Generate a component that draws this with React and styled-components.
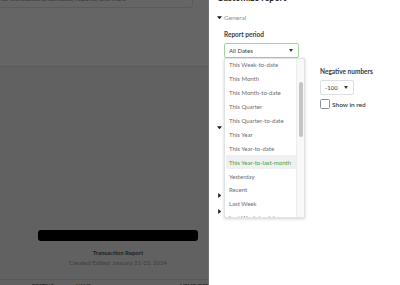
import React from 'react';
import styled, { createGlobalStyle } from 'styled-components';

const GlobalStyle = createGlobalStyle`
  html, body { margin: 0; padding: 0; }
  body { font-family: Lato, "Open Sans", sans-serif; background: #fff; }
`;

const Screen = styled.div`
  width: 400px;
  height: 285px;
  display: flex;
  overflow: hidden;
`;

/* dimmed page behind the drawer */
const Backdrop = styled.div`
  width: 209px;
  flex-shrink: 0;
  box-sizing: border-box;
  border-right: 1px solid #6f6f6f;
  display: flex;
  flex-direction: column;
  background: #616161;
`;

const TopArea = styled.div`
  height: 66px;
  flex-shrink: 0;
  background: #656565;
  border-bottom: 1px solid #5a5a5a;
`;

const SearchBox = styled.div`
  width: 193px;
  height: 8px;
  box-sizing: border-box;
  border: 1px solid #5b5b5b;
  border-top: none;
  border-left: none;
  border-bottom-right-radius: 4px;
  display: flex;
  justify-content: flex-end;
  overflow: hidden;
`;

const SearchText = styled.span`
  font-size: 6.5px;
  line-height: 8px;
  margin-top: -5px;
  margin-right: 66px;
  white-space: nowrap;
  color: #333;
`;

const ReportArea = styled.div`
  flex: 1;
  display: flex;
  flex-direction: column;
  justify-content: flex-end;
  align-items: center;
  padding-left: 28px;
`;

const Redacted = styled.div`
  width: 160px;
  height: 11px;
  background: #000;
  border-radius: 3px;
`;

const ReportTitle = styled.div`
  margin-top: 7px;
  font-size: 6px;
  line-height: 10px;
  font-weight: 700;
  color: #222;
`;

const ReportSub = styled.div`
  font-size: 6px;
  line-height: 10px;
  color: #3e3e3e;
  margin-bottom: 11px;
`;

const TableHead = styled.div`
  height: 6px;
  box-sizing: border-box;
  flex-shrink: 0;
  border-top: 1px solid #595959;
  display: grid;
  grid-template-columns: 32px 44px 104px 1fr;
  padding-top: 3px;
  font-size: 5px;
  line-height: 6px;
  font-weight: 700;
  color: #222;
  white-space: nowrap;
  overflow: hidden;
`;

/* drawer */
const Panel = styled.div`
  flex: 1;
  position: relative;
  background: #fff;
  padding-left: 8px;
  color: #393a3d;
`;

const PanelTitle = styled.div`
  margin-top: -8px;
  font-size: 9px;
  line-height: 12px;
  font-weight: 700;
  color: #2a2b2e;
`;

const SectionHead = styled.div`
  display: flex;
  align-items: center;
  gap: 2px;
  height: 10px;
  margin-top: ${(p) => p.$gap}px;
  font-size: 6.5px;
  color: #8d9096;
`;

const Caret = styled.svg`
  width: 5px;
  height: 5px;
  flex-shrink: 0;
`;

const SectionBody = styled.div`
  padding-left: 7px;
`;

const FieldGrid = styled.div`
  display: grid;
  grid-template-columns: 96px 1fr;
  row-gap: 9px;
  margin-top: 8px;
`;

const Field = styled.div`
  grid-column: ${(p) => p.$col};
  grid-row: ${(p) => p.$row};
  display: flex;
  flex-direction: column;
  align-items: flex-start;
`;

const Label = styled.div`
  font-size: 6.5px;
  line-height: 9px;
  font-weight: 700;
  color: #393a3d;
  white-space: nowrap;
`;

const Select = styled.div`
  margin-top: 4px;
  width: ${(p) => p.$w}px;
  height: 15px;
  box-sizing: border-box;
  border: 1px solid ${(p) => (p.$focus ? '#9fd49a' : '#dcdee2')};
  border-radius: 2px;
  display: flex;
  align-items: center;
  justify-content: space-between;
  padding: 0 5px 0 4px;
  font-size: 6px;
  color: #393a3d;
`;

const SmallCaret = styled.svg`
  width: 4px;
  height: 3px;
`;

const CheckRow = styled.label`
  display: flex;
  align-items: center;
  gap: 2px;
  margin-top: 4px;
  font-size: 6.5px;
  font-weight: 600;
  color: #393a3d;
`;

const CheckBox = styled.span`
  width: 10px;
  height: 10px;
  box-sizing: border-box;
  border: 1px solid #8d9096;
  border-radius: 1.5px;
  background: #fff;
`;

/* options of the second group, all covered by the open menu */
const CoveredBody = styled.div`
  height: 58px;
`;

/* open select menu, lies over the form */
const Menu = styled.div`
  position: absolute;
  left: 15px;
  top: 58px;
  width: 81px;
  height: 160px;
  box-sizing: border-box;
  border: 1px solid #e1e2e5;
  background: #fff;
  box-shadow: 0 1px 3px rgba(0, 0, 0, 0.18);
  display: flex;
  overflow: hidden;
`;

const MenuList = styled.div`
  flex: 1;
  padding: 0 0 0 1px;
  margin-top: -1px;
`;

const MenuItem = styled.div`
  height: 13.9px;
  display: flex;
  align-items: center;
  padding-left: 3px;
  font-size: 6px;
  white-space: nowrap;
  color: ${(p) => (p.$active ? '#4a9e3f' : '#6b6c72')};
  background: ${(p) => (p.$active ? '#eef0f2' : 'transparent')};
`;

const Track = styled.div`
  width: 8px;
  flex-shrink: 0;
  background: #f8f8f8;
  border-left: 1px solid #ededed;
  box-sizing: border-box;
  display: flex;
  justify-content: center;
`;

const Thumb = styled.div`
  margin-top: 23px;
  width: 4px;
  height: 55px;
  border-radius: 2px;
  background: #c4c4c4;
`;

const periods = [
  'This Week-to-date',
  'This Month',
  'This Month-to-date',
  'This Quarter',
  'This Quarter-to-date',
  'This Year',
  'This Year-to-date',
  'This Year-to-last-month',
  'Yesterday',
  'Recent',
  'Last Week',
  'Last Week-to-date',
];

const Down = () => (
  <Caret viewBox="0 0 5 5">
    <path d="M0 1.2 H5 L2.5 4.2 Z" fill="#1b1b1b" />
  </Caret>
);

const Right = () => (
  <Caret viewBox="0 0 5 5">
    <path d="M1.2 0 V5 L4.2 2.5 Z" fill="#1b1b1b" />
  </Caret>
);

const SelectCaret = () => (
  <SmallCaret viewBox="0 0 4 3">
    <path d="M0 0 H4 L2 3 Z" fill="#393a3d" />
  </SmallCaret>
);

const App = () => {
  return (
    <>
      <GlobalStyle />
      <Screen>
        <Backdrop>
          <TopArea>
            <SearchBox>
              <SearchText>Navigate or search for transactions, contacts, reports, and more</SearchText>
            </SearchBox>
          </TopArea>
          <ReportArea>
            <Redacted />
            <ReportTitle>Transaction Report</ReportTitle>
            <ReportSub>Created/Edited: January 21-25, 2024</ReportSub>
          </ReportArea>
          <TableHead>
            <span />
            <span>POSTING</span>
            <span>NAME</span>
            <span>MEMO/DESCRIPTION</span>
          </TableHead>
        </Backdrop>

        <Panel>
          <PanelTitle>Customize report</PanelTitle>

          <SectionHead $gap={8}>
            <Down />
            <span>General</span>
          </SectionHead>
          <SectionBody>
            <FieldGrid>
              <Field $col="1" $row="1">
                <Label>Report period</Label>
                <Select $w={75} $focus>
                  <span>All Dates</span>
                  <SelectCaret />
                </Select>
              </Field>
              <Field $col="2" $row="2">
                <Label>Negative numbers</Label>
                <Select $w={34}>
                  <span>-100</span>
                  <SelectCaret />
                </Select>
                <CheckRow>
                  <CheckBox />
                  <span>Show in red</span>
                </CheckRow>
              </Field>
            </FieldGrid>
          </SectionBody>

          <SectionHead $gap={13}>
            <Down />
          </SectionHead>
          <CoveredBody />

          <SectionHead $gap={0}>
            <Right />
          </SectionHead>
          <SectionHead $gap={6}>
            <Right />
          </SectionHead>

          <Menu>
            <MenuList>
              {periods.map((p) => (
                <MenuItem key={p} $active={p === 'This Year-to-last-month'}>
                  {p}
                </MenuItem>
              ))}
            </MenuList>
            <Track>
              <Thumb />
            </Track>
          </Menu>
        </Panel>
      </Screen>
    </>
  );
};

export default App;
